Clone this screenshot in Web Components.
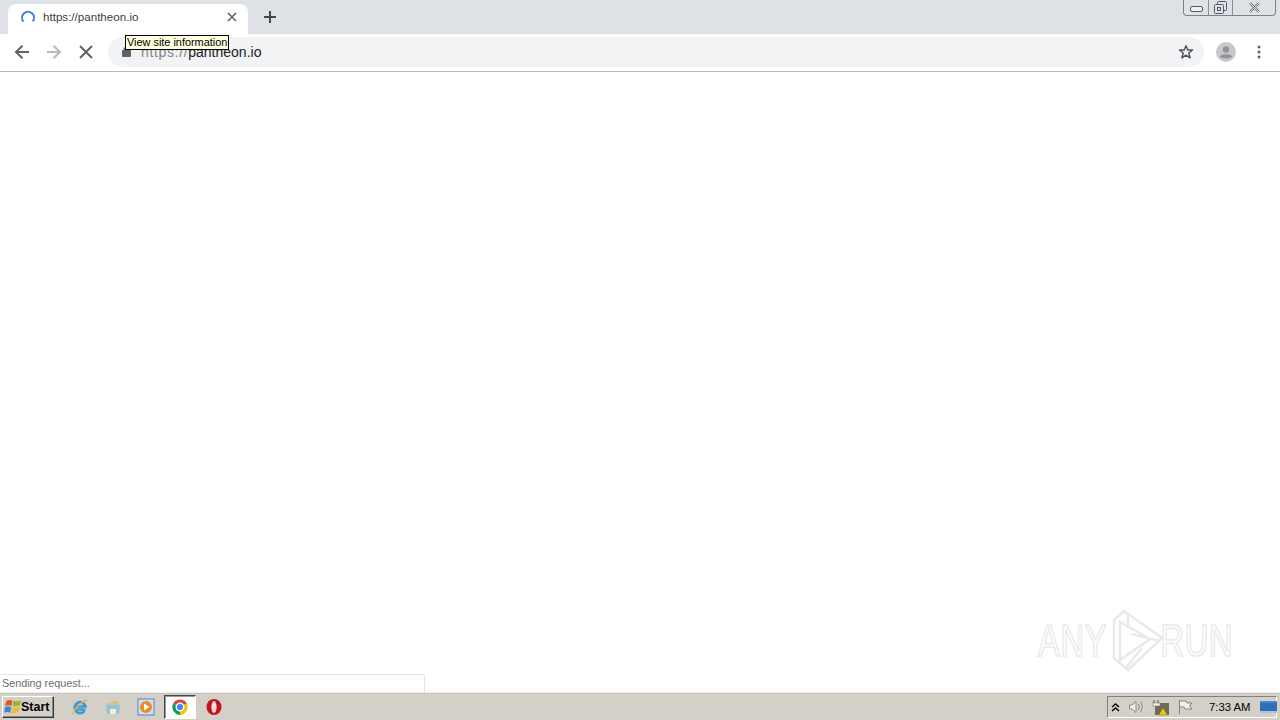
<!DOCTYPE html>
<html lang="en"><head><meta charset="utf-8"><title>pantheon.io</title>
<style>
html,body{margin:0;height:100%;overflow:hidden;background:#fff}
body{display:flex;flex-direction:column;width:1280px;height:720px;position:relative;font-family:"Liberation Sans",Arial,sans-serif}
</style></head><body>
<browser-tabstrip></browser-tabstrip>
<browser-toolbar></browser-toolbar>
<page-area></page-area>
<win-taskbar></win-taskbar>
<status-bubble>Sending request...</status-bubble>
<run-watermark></run-watermark>
<script>
function def(name,html){customElements.define(name,class extends HTMLElement{constructor(){super();this.attachShadow({mode:'open'}).innerHTML=html}})}
def('browser-tabstrip',`<style>
:host{display:flex;flex:none;height:34px;background:#dee1e6;position:relative}
.tab{width:240px;height:30px;margin:4px 0 0 8px;background:#fff;border-radius:8px 8px 0 0;display:flex;align-items:center;padding:0 11px 4px 12px;box-sizing:border-box;font:11.6px "Liberation Sans",Arial,sans-serif;color:#3c4043}
.tab svg.sp{margin-right:7px;flex:none}
.t{flex:1;margin-top:-1px}
.new{margin:9px 0 0 14px;width:16px;height:16px}
win-buttons{position:absolute;right:0;top:0}
</style>
<div class="tab"><svg class="sp" width="16" height="16" viewBox="0 0 16 16"><path d="M3.400 12.600A6 6 0 1 1 12.800 12.400" fill="none" stroke="#3f7fdc" stroke-width="2"/></svg><span class="t">https://pantheon.io</span>
<svg width="10" height="10" viewBox="0 0 10 10"><path d="M1 1L9 9M9 1L1 9" stroke="#5f6368" stroke-width="1.600"/></svg></div>
<svg class="new" viewBox="0 0 16 16"><path d="M8 2V14M2 8H14" stroke="#45484c" stroke-width="2"/></svg>
<win-buttons></win-buttons>`);
def('win-buttons',`<style>
:host{display:flex;height:16px;width:93px;margin-right:4px;border:1px solid #7c8088;border-top:none;border-radius:0 0 4px 4px;box-sizing:border-box}
div{display:flex;align-items:center;justify-content:center;border-right:1px solid #8a8e96;height:15px}
div:nth-of-type(1){width:24px}div:nth-of-type(2){width:23px}div:nth-of-type(3){flex:1;border:none}
</style>
<div><svg width="13" height="7" viewBox="0 0 13 7" style="margin-top:4px"><rect x=".5" y=".5" width="12" height="5" rx="1.500" fill="#eef0f3" stroke="#555a62"/></svg></div>
<div><svg width="13" height="13" viewBox="0 0 13 13"><rect x="3.500" y=".5" width="9" height="9" rx="1" fill="none" stroke="#555a62"/><rect x=".5" y="3.500" width="9" height="9" rx="1" fill="#dee1e6" stroke="#555a62"/><rect x="3.500" y="6.500" width="3" height="3" fill="none" stroke="#555a62"/></svg></div>
<div><svg width="13" height="11" viewBox="0 0 13 11"><path d="M2 1L11 10M11 1L2 10" stroke="#666b73" stroke-width="2.400"/><path d="M2 1L11 10M11 1L2 10" stroke="#eef0f3" stroke-width="1"/></svg></div>`);
def('browser-toolbar',`<style>
:host{display:flex;flex:none;height:38px;box-sizing:border-box;border-bottom:1px solid #b8b8b8;background:#fff;align-items:center;padding:0 0 2px 14px;position:relative}
svg{flex:none}
.box{width:1096px;height:30px;border-radius:15px;background:#f1f3f4;display:flex;align-items:center;padding:0 10px 0 14px;box-sizing:border-box;font:14px "Liberation Sans",Arial,sans-serif;color:#202124}
.box .u{margin-left:10px;flex:1}.box .u i{font-style:normal;color:#80868b;letter-spacing:.65px}
.tip{position:absolute;left:125px;top:1px;height:15px;border:1px solid #000;background:#ffffe1;color:#000;font:10.9px/12px "Liberation Sans",Arial,sans-serif;padding:0 1px;box-sizing:border-box;white-space:nowrap;width:104px}
</style>
<svg width="16" height="16" viewBox="0 0 16 16"><path d="M15 8H2.500M8.500 1.800L2 8L8.500 14.200" fill="none" stroke="#5f6368" stroke-width="2"/></svg>
<svg style="margin-left:16px" width="16" height="16" viewBox="0 0 16 16"><path d="M1 8H13.500M7.500 1.800L14 8L7.500 14.200" fill="none" stroke="#b6b9bd" stroke-width="2"/></svg>
<svg style="margin-left:16px" width="16" height="16" viewBox="0 0 16 16"><path d="M2 2L14 14M14 2L2 14" stroke="#5f6368" stroke-width="2"/></svg>
<div class="box" style="margin-left:14px"><svg width="9" height="10" viewBox="0 0 9 10"><rect y="3" width="9" height="7" rx="1" fill="#5f6368"/><path d="M2 4V2.500a2.500 2 0 0 1 5 0V4" fill="none" stroke="#5f6368" stroke-width="1.200"/></svg><span class="u"><i>https://</i>pantheon.io</span>
<svg width="16" height="16" viewBox="0 0 16 16"><path d="M8 1.800L9.800 6H14.500L10.800 9L12.100 13.800L8 11.200L3.900 13.800L5.200 9L1.500 6H6.200Z" fill="none" stroke="#505458" stroke-width="1.500" stroke-linejoin="round"/></svg></div>
<svg style="margin-left:12px" width="20" height="20" viewBox="0 0 20 20"><circle cx="10" cy="10" r="10" fill="#c6c8cb"/><circle cx="10" cy="7.500" r="3.200" fill="#8f9296"/><path d="M3.800 14.500C5.500 11.500 14.500 11.500 16.200 14.500C14.500 17 5.500 17 3.800 14.500Z" fill="#8f9296"/></svg>
<svg style="margin-left:21px" width="4" height="14" viewBox="0 0 4 14"><circle cx="2" cy="2" r="1.500" fill="#5f6368"/><circle cx="2" cy="7" r="1.500" fill="#5f6368"/><circle cx="2" cy="12" r="1.500" fill="#5f6368"/></svg>
<div class="tip">View site information</div>`);
def('page-area',`<style>:host{display:block;flex:1;background:#fff}</style>`);
def('status-bubble',`<style>:host{position:absolute;left:0;top:674px;width:425px;height:18px;box-sizing:border-box;background:#fff;border:1px solid #e4e4e4;border-left:none;border-bottom:none;border-radius:0 3px 0 0;font:10.8px/16px "Liberation Sans",Arial,sans-serif;color:#6a6e73;padding-left:2px}</style><slot></slot>`);
def('run-watermark',`<style>
:host{position:absolute;left:1038px;top:608px;width:195px;height:66px;display:flex;align-items:center;justify-content:space-between;pointer-events:none;font:44px/1 "Liberation Sans",Arial,sans-serif}
span{color:#fff;-webkit-text-stroke:2px #ececec;text-shadow:0 0 3px #f0f0f0;display:inline-block;letter-spacing:1px}
.a{transform-origin:left;transform:scaleX(.74)}.r{transform-origin:right;transform:scaleX(.74)}
svg{position:absolute;left:64px;top:0;filter:blur(.5px)}
</style><span class="a">ANY</span>
<svg width="66" height="66" viewBox="0 0 66 66" fill="none" stroke="#e9e9e9" stroke-width="2.500"><path d="M12 12L22 3L60 30L26 62L12 50Z"/><path d="M18 14V52L48 31Z"/><path d="M26 4V20M58 33L30 26M24 60L40 40"/></svg>
<span class="r">RUN</span>`);
def('win-taskbar',`<style>
:host{display:flex;flex:none;height:28px;box-sizing:border-box;background:#d4d0c8;border-top:1px solid #f2f0ea;align-items:center;position:relative;box-shadow:inset 0 1px 0 #c4c1ba}
.start{margin-left:2px;width:52px;height:22px;box-sizing:border-box;border:1px solid;border-color:#fff #333 #333 #fff;box-shadow:inset -1px -1px 0 #888;display:flex;align-items:center;font:bold 12.500px "Liberation Sans",Arial,sans-serif;color:#000;padding-left:1px;gap:0}
.i{display:flex;flex:none;align-items:center;justify-content:center}
.chrome{width:32px;height:24px;box-sizing:border-box;background:#fff;border:1px solid;border-color:#444 #fff #fff #444;box-shadow:inset 1px 1px 0 #999}
.tray{position:absolute;right:3px;top:3px;height:22px;width:170px;box-sizing:border-box;border:1px solid;border-color:#808080 #fff #fff #808080;display:flex;align-items:center;font:11.3px "Liberation Sans",Arial,sans-serif;color:#000}
.tray span{margin-left:16px;white-space:nowrap}
</style>
<div class="start"><svg width="17" height="17" viewBox="0 0 16 16"><path d="M2 3Q5 1 8 2.500L7 7.500Q4 6 1 7.500Z" fill="#e2562c"/><path d="M9 2.500Q12 4 16 2L15 6.500Q11.500 8.500 8 7.500Z" fill="#8fb838"/><path d="M1 8.500Q4 7 6.800 8.500L6 14Q3 12.500 0 14Z" fill="#3f88d8"/><path d="M8 8.500Q11.500 9.500 15 7.500L14 12.500Q10.500 15 7 14Z" fill="#efbe2c"/></svg>Start</div>
<div class="i" style="margin-left:17px"><svg width="18" height="18" viewBox="0 0 18 18"><path d="M14.500 11.500H4.500M4 8.500H14.500A5.500 5.500 0 1 0 13.500 13" fill="none" stroke="#3a9ad9" stroke-width="2.600"/><path d="M2 16C4 10 10 3.500 16 2" fill="none" stroke="#e9b838" stroke-width="1.300"/></svg></div>
<div class="i" style="margin-left:15px"><svg width="18" height="18" viewBox="0 0 18 18"><path d="M2 5H7L8 3H15V7H2Z" fill="#d9c47a"/><path d="M2 7H16L15 16H3Z" fill="#8fc3de"/><rect x="6" y="11" width="6" height="5" fill="#eef3c8"/></svg></div>
<div class="i" style="margin-left:15px"><svg width="18" height="18" viewBox="0 0 18 18"><rect x="1" y="1" width="16" height="16" fill="#cfe2f2" stroke="#4c88c4"/><circle cx="9" cy="9" r="6" fill="#ee8b1f"/><path d="M7 5.500L12.500 9L7 12.500Z" fill="#fff"/></svg></div>
<div class="i chrome" style="margin-left:9px"><svg width="16" height="16" viewBox="0 0 16 16"><path d="M8 8L1.100 4.500A8 8 0 0 1 14.900 4.500Z" fill="#db4437"/><path d="M8 8L14.900 4.500A8 8 0 0 1 8 16Z" fill="#f4c20d"/><path d="M8 8L8 16A8 8 0 0 1 1.100 4.500Z" fill="#0f9d58"/><circle cx="8" cy="8" r="3.800" fill="#4285f4" stroke="#fff" stroke-width="1.400"/></svg></div>
<div class="i" style="margin-left:9px"><svg width="18" height="18" viewBox="0 0 18 18"><ellipse cx="9" cy="9" rx="7.500" ry="8" fill="#c3141c"/><ellipse cx="9" cy="9" rx="2.600" ry="6" fill="#f6dcdc"/></svg></div>
<div class="tray">
<svg style="margin-left:3px;flex:none" width="9" height="11" viewBox="0 0 9 11"><path d="M1 5L4.500 2L8 5M1 9L4.500 6L8 9" fill="none" stroke="#000" stroke-width="1.400"/></svg>
<svg style="margin-left:8px;flex:none" width="18" height="16" viewBox="0 0 18 16" fill="none" stroke="#8e8c86"><path d="M1.500 6H4L8 2.500V13.500L4 10H1.500Z" fill="#ececec"/><path d="M10.500 5Q12 8 10.500 11M13 3Q15.500 8 13 13"/></svg>
<svg style="margin-left:6px;flex:none" width="18" height="17" viewBox="0 0 18 17"><rect x="3" y="4" width="14" height="12" fill="#6f6a58"/><path d="M2 1V6M6 1V6" stroke="#777" stroke-width="1.400"/><rect x="1" y="4" width="7" height="3" fill="#f4f2e8" stroke="#777" stroke-width=".6"/><path d="M11 9L15.500 16H6.500Z" fill="#f2c417" stroke="#8a7210" stroke-width=".6"/></svg>
<svg style="margin-left:7px;flex:none" width="16" height="16" viewBox="0 0 16 16" fill="#f2f1ed" stroke="#85837d"><path d="M2.500 1V15"/><path d="M2.500 2H9L10 4H15L12.500 7L15 10H8L7 8H2.500Z"/></svg>
<span>7:33 AM</span>
<svg style="margin-left:10px;flex:none" width="17" height="13" viewBox="0 0 17 13"><rect width="17" height="12" fill="#2f6fb8"/><rect y="10" width="17" height="2" fill="#a9c4de"/><rect width="17" height="2" fill="#4a87cc"/></svg>
</div>`);
</script>
</body></html>
